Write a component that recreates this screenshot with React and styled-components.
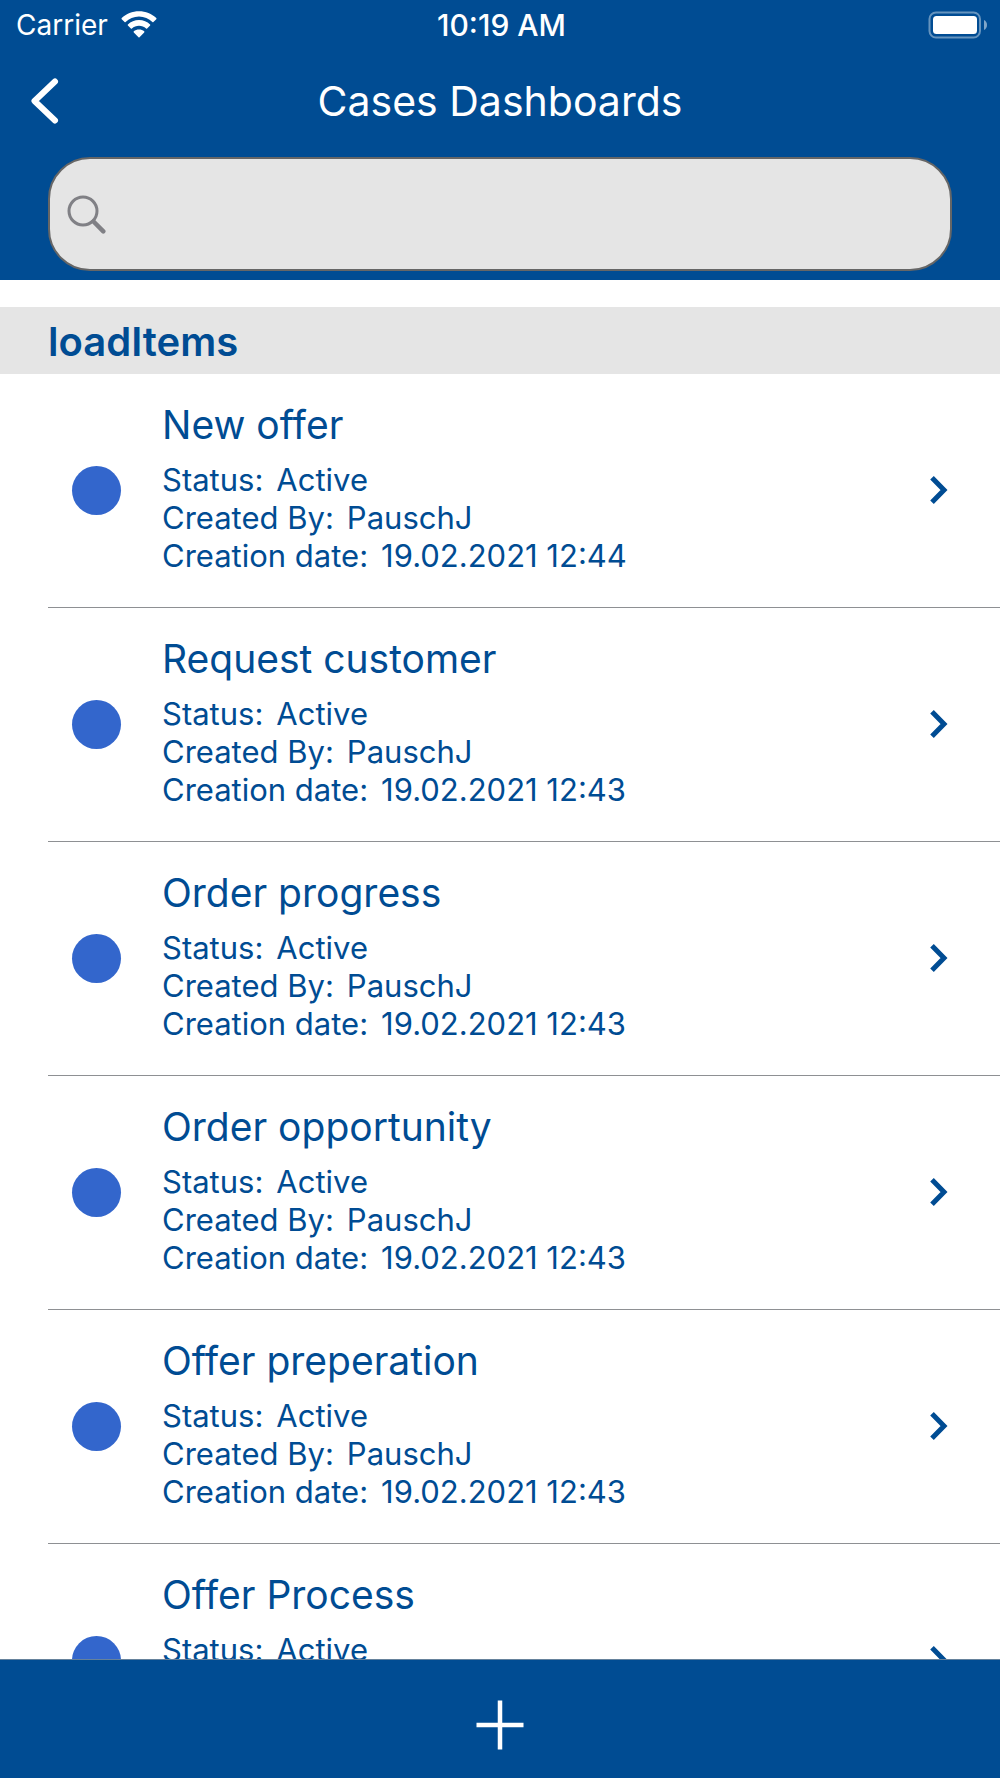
import React from "react";
import styled, { createGlobalStyle } from "styled-components";

const NAVY = "#004c93";
const GREY = "#e5e5e5";

const GlobalStyle = createGlobalStyle`
  *, *::before, *::after { box-sizing: border-box; }
  body {
    margin: 0;
    background: #fff;
    color: ${NAVY};
    font-family: Inter, Roboto, "Liberation Sans", sans-serif;
  }
  h1, h2, ul { margin: 0; padding: 0; }
  button { border: 0; padding: 0; background: none; color: inherit; font: inherit; cursor: pointer; }
  svg { display: block; }
`;

const Screen = styled.div`
  display: flex;
  flex-direction: column;
  height: 100vh;
`;

const Header = styled.header`
  flex: none;
  background: ${NAVY};
  color: #fff;
  padding-bottom: 9px;
`;

const StatusBar = styled.div`
  display: grid;
  grid-template-columns: 1fr auto 1fr;
  align-items: center;
  height: 50px;
  padding: 0 13px 0 16px;
  font-size: 28px;
  line-height: 34px;
`;

const Carrier = styled.div`
  display: flex;
  align-items: center;
  gap: 12px;
`;

const Clock = styled.time`
  font-size: 30px;
  font-weight: 500;
`;

const BatterySlot = styled.div`
  justify-self: end;
`;

const NavBar = styled.div`
  display: grid;
  grid-template-columns: 88px 1fr 88px;
  align-items: center;
  height: 107px;
  padding-bottom: 5px;
`;

const BackButton = styled.button`
  display: flex;
  align-items: center;
  height: 88px;
  padding-left: 30px;
`;

const Title = styled.h1`
  font-size: 41px;
  font-weight: 400;
  line-height: 48px;
  text-align: center;
`;

const SearchField = styled.label`
  display: flex;
  align-items: center;
  gap: 16px;
  height: 114px;
  margin: 0 48px;
  padding: 0 17px;
  border: 2px solid #666;
  border-radius: 42px;
  background: ${GREY};
  color: #808085;
`;

const SearchInput = styled.input`
  flex: 1;
  min-width: 0;
  border: 0;
  outline: 0;
  background: transparent;
  color: ${NAVY};
  font: inherit;
  font-size: 40px;
  line-height: 48px;
`;

const Content = styled.main`
  flex: 1;
  min-height: 0;
  padding-top: 27px;
  overflow-y: auto;
  scrollbar-width: none;
`;

const SectionTitle = styled.h2`
  padding: 11px 48px 8px;
  background: ${GREY};
  font-size: 40px;
  font-weight: 600;
  line-height: 48px;
`;

const CaseList = styled.ul`
  list-style: none;
`;

const CaseRow = styled.li`
  margin-left: 48px;
  border-bottom: 1px solid #8e9093;
`;

const CaseButton = styled.button`
  display: flex;
  align-items: center;
  width: 100%;
  padding: 27px 52px 28px 24px;
  text-align: left;
`;

const Dot = styled.span`
  flex: none;
  width: 49px;
  height: 49px;
  margin-right: 41px;
  border-radius: 50%;
  background: #3366cc;
`;

const CaseText = styled.span`
  flex: 1;
  display: flex;
  flex-direction: column;
  padding-bottom: 4px;
`;

const CaseName = styled.span`
  margin-bottom: 12px;
  font-size: 39px;
  line-height: 48px;
`;

const Detail = styled.span`
  display: flex;
  gap: 13px;
  font-size: 31px;
  line-height: 38px;
`;

const Footer = styled.footer`
  flex: none;
  display: flex;
  justify-content: center;
  height: 119px;
  border-top: 1px solid #66829c;
  background: ${NAVY};
  color: #fff;
`;

const AddButton = styled.button`
  display: flex;
  align-items: center;
  justify-content: center;
  width: 120px;
  padding-top: 12px;
`;

const WifiIcon = () => (
  <svg width="38" height="28" viewBox="0 0 38 28" fill="currentColor" aria-hidden="true">
    <path d="M19 5.6c5.2 0 9.9 2.1 13.4 5.5.3.3.7.3 1 0l2.9-2.9c.3-.3.3-.8 0-1.1C31.8 2.7 25.7.3 19 .3S6.2 2.7 1.7 7.1c-.3.3-.3.8 0 1.1l2.9 2.9c.3.3.7.3 1 0C9.1 7.7 13.8 5.6 19 5.6z" />
    <path d="M19 14.8c2.7 0 5.2 1 7.1 2.7.3.3.7.3 1 0l3-3c.3-.3.3-.8 0-1.1C27.2 10.7 23.3 9.1 19 9.1s-8.2 1.6-11.1 4.3c-.3.3-.3.8 0 1.1l3 3c.3.3.7.3 1 0 1.9-1.7 4.4-2.7 7.1-2.7z" />
    <path d="M24.2 21.4c.3-.3.3-.8 0-1.1C22.8 19.2 21 18.6 19 18.6s-3.8.6-5.2 1.7c-.3.3-.3.8 0 1.1l4.7 4.8c.3.3.7.3 1 0z" />
  </svg>
);

const BatteryIcon = () => (
  <svg width="60" height="28" viewBox="0 0 60 28" aria-hidden="true">
    <rect x="2.5" y="1.5" width="50.5" height="25" rx="6.5" fill="none" stroke="#6694be" strokeWidth="2" />
    <rect x="6" y="5" width="44" height="18" rx="3.5" fill="#fff" />
    <path d="M57 9v10c1.8-.8 3-2.7 3-5s-1.2-4.2-3-5z" fill="#80a6c9" />
  </svg>
);

const BackIcon = () => (
  <svg width="30" height="48" viewBox="0 0 30 48" fill="none" stroke="currentColor" strokeWidth="6" strokeLinecap="round" strokeLinejoin="round" aria-hidden="true">
    <path d="M25 4.5 4.500 24 25 43.5" />
  </svg>
);

const SearchIcon = () => (
  <svg width="40" height="40" viewBox="0 0 40 40" fill="none" stroke="currentColor" strokeLinecap="round" aria-hidden="true">
    <circle cx="16" cy="17" r="14" strokeWidth="3" />
    <path d="m26.500 27.500 9.800 9.800" strokeWidth="4.5" />
  </svg>
);

const ChevronIcon = () => (
  <svg width="18" height="28" viewBox="0 0 18 28" fill="none" stroke="currentColor" strokeWidth="5" aria-hidden="true">
    <path d="M2 1.800 14 14 2 26.200" />
  </svg>
);

const PlusIcon = () => (
  <svg width="50" height="50" viewBox="0 0 50 50" fill="none" stroke="currentColor" strokeWidth="4.5" aria-hidden="true">
    <path d="M25 .5v49M1.500 25h47" />
  </svg>
);

const cases = [
  { name: "New offer", date: "19.02.2021 12:44" },
  { name: "Request customer", date: "19.02.2021 12:43" },
  { name: "Order progress", date: "19.02.2021 12:43" },
  { name: "Order opportunity", date: "19.02.2021 12:43" },
  { name: "Offer preperation", date: "19.02.2021 12:43" },
  { name: "Offer Process", date: "19.02.2021 12:43" },
];

const CaseItem = ({ name, date }) => (
  <CaseRow>
    <CaseButton type="button">
      <Dot />
      <CaseText>
        <CaseName>{name}</CaseName>
        <Detail><span>Status:</span><span>Active</span></Detail>
        <Detail><span>Created By:</span><span>PauschJ</span></Detail>
        <Detail><span>Creation date:</span><span>{date}</span></Detail>
      </CaseText>
      <ChevronIcon />
    </CaseButton>
  </CaseRow>
);

export default function App() {
  return (
    <Screen>
      <GlobalStyle />
      <Header>
        <StatusBar>
          <Carrier>Carrier<WifiIcon /></Carrier>
          <Clock>10:19 AM</Clock>
          <BatterySlot><BatteryIcon /></BatterySlot>
        </StatusBar>
        <NavBar>
          <BackButton type="button" aria-label="Back"><BackIcon /></BackButton>
          <Title>Cases Dashboards</Title>
        </NavBar>
        <SearchField>
          <SearchIcon />
          <SearchInput type="search" aria-label="Search" />
        </SearchField>
      </Header>
      <Content>
        <SectionTitle>loadItems</SectionTitle>
        <CaseList>
          {cases.map((item) => <CaseItem key={item.name} {...item} />)}
        </CaseList>
      </Content>
      <Footer>
        <AddButton type="button" aria-label="Add"><PlusIcon /></AddButton>
      </Footer>
    </Screen>
  );
}
